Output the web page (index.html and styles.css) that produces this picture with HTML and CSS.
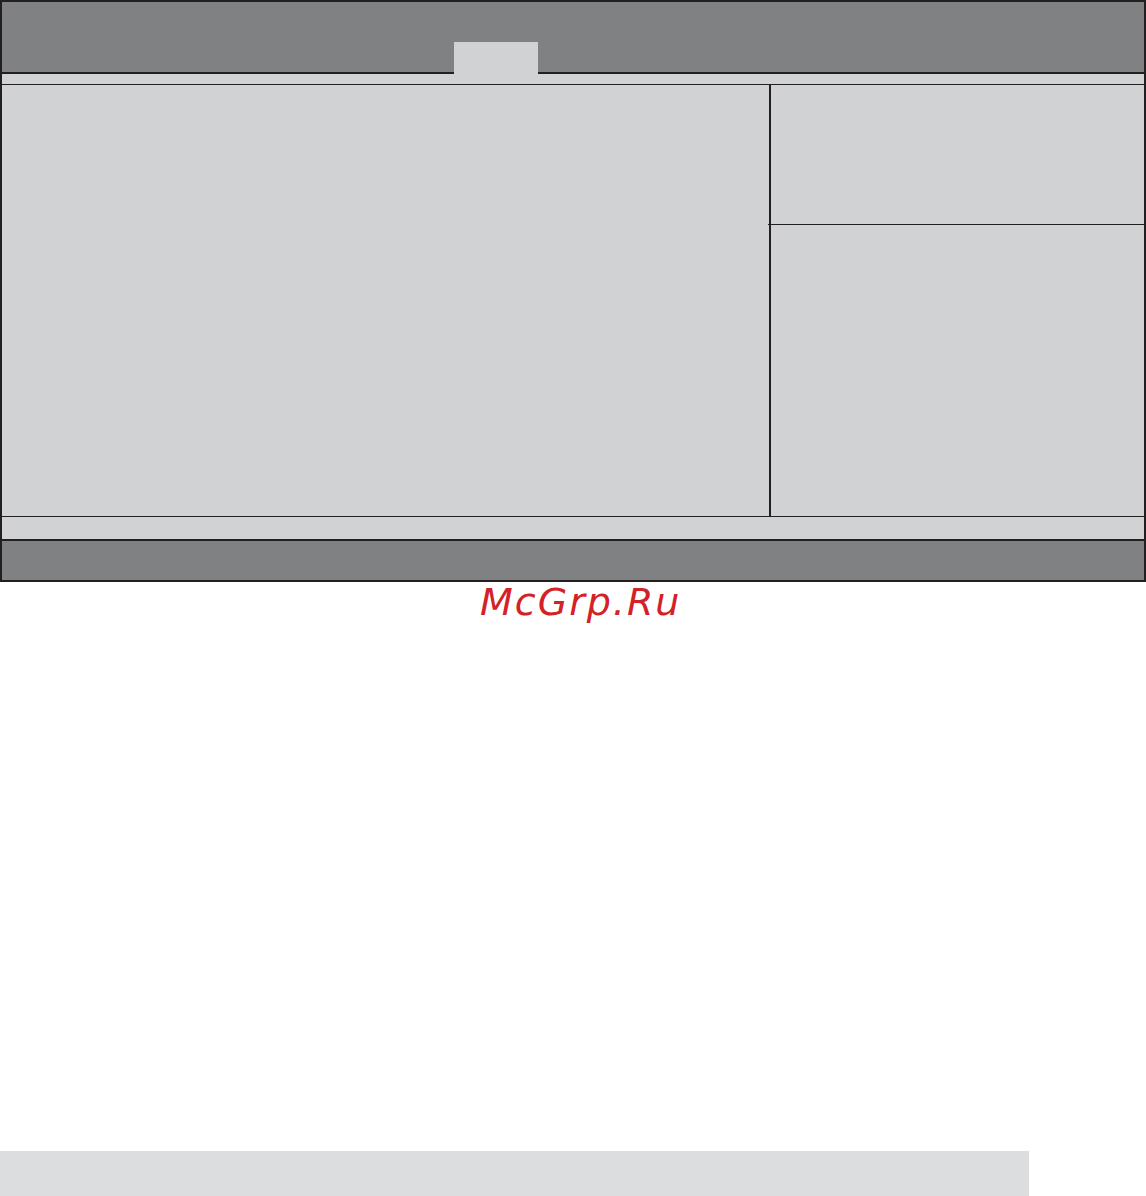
FILE: index.html
```html
<!DOCTYPE html>
<html>
<head>
<meta charset="utf-8">
<link rel="stylesheet" href="styles.css">
</head>
<body>
<div class="frame">
  <div class="topbar">
    <div class="seg seg-left"></div>
    <div class="tab-slot"><div class="tab"></div></div>
    <div class="seg seg-right"></div>
  </div>
  <div class="strip"></div>
  <div class="main">
    <div class="left-pane"></div>
    <div class="right-pane">
      <div class="help-top"></div>
      <div class="help-bottom"></div>
    </div>
  </div>
  <div class="status"></div>
  <div class="footer"></div>
</div>
<div class="watermark">McGrp.Ru</div>
<div class="spacer"></div>
<div class="bottom-bar"></div>
</body>
</html>
```

FILE: styles.css
```css
html, body {
  margin: 0;
  padding: 0;
  background: #ffffff;
}
body {
  width: 1146px;
  height: 1196px;
  overflow: hidden;
  font-family: "DejaVu Sans", "Liberation Sans", sans-serif;
}
.frame {
  box-sizing: border-box;
  width: 1146px;
  height: 582px;
  border: 2px solid #231f20;
  background: #d1d2d4;
  display: flex;
  flex-direction: column;
}
.topbar {
  display: flex;
  height: 72px;
  flex: none;
}
.seg {
  box-sizing: border-box;
  background: #808183;
  border-bottom: 2px solid #231f20;
}
.seg-left {
  width: 452px;
}
.seg-right {
  flex: 1;
}
.tab-slot {
  width: 84px;
  background: #808183;
  display: flex;
  flex-direction: column;
}
.tab {
  margin-top: 40px;
  flex: 1;
  background: #d1d2d4;
}
.strip {
  height: 10px;
  flex: none;
  border-bottom: 1px solid #231f20;
}
.main {
  flex: 1;
  display: flex;
  border-bottom: 1px solid #231f20;
}
.left-pane {
  width: 767px;
}
.right-pane {
  flex: 1;
  border-left: 2px solid #231f20;
  display: flex;
  flex-direction: column;
}
.help-top {
  height: 139px;
  border-bottom: 1px solid #231f20;
  position: relative;
}
.help-top::after {
  content: "";
  position: absolute;
  left: -3px;
  bottom: -1px;
  width: 3px;
  height: 1px;
  background: #231f20;
}
.help-bottom {
  flex: 1;
}
.status {
  height: 22px;
  flex: none;
}
.footer {
  height: 39px;
  flex: none;
  background: #808183;
  border-top: 2px solid #231f20;
}
.watermark {
  color: #d42027;
  font-family: "DejaVu Sans", sans-serif;
  font-style: oblique;
  font-size: 38px;
  letter-spacing: 2px;
  line-height: 40px;
  padding-left: 480px;
  height: 40px;
}
.spacer {
  height: 529px;
}
.bottom-bar {
  width: 1029px;
  height: 45px;
  background: #dcdddf;
}
```
